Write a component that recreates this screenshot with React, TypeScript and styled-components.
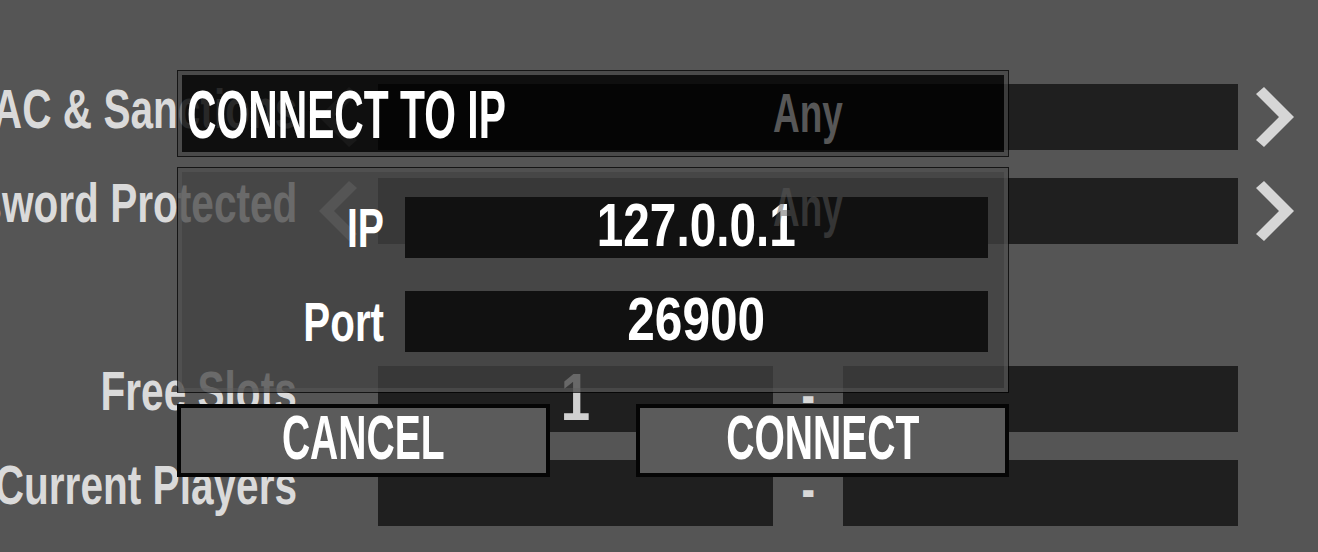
import React from "react";
import styled, { createGlobalStyle } from "styled-components";

const GlobalStyle = createGlobalStyle`
  html, body {
    margin: 0;
    padding: 0;
    background: #555555;
    overflow: hidden;
  }
  body {
    font-family: "Liberation Sans", Arial, sans-serif;
    font-weight: 700;
  }
`;

const Screen = styled.div`
  position: relative;
  width: 1318px;
  height: 552px;
  overflow: hidden;
  background: #555555;
`;

// the game font is a very narrow one, so squeeze a normal face horizontally
const Squeeze = styled.span<{ $sx: number; $from: "left" | "center" | "right" }>`
  display: inline-block;
  white-space: nowrap;
  transform: scaleX(${(p) => p.$sx});
  transform-origin: ${(p) => p.$from} center;
`;

/* ---------- filter panel behind the dialog ---------- */

const FilterPanel = styled.div`
  display: flex;
  flex-direction: column;
  gap: 28px;
  padding-top: 84px;
`;

const FilterRow = styled.div`
  display: grid;
  grid-template-columns: 297px 81px 860px 76px;
  grid-template-rows: 66px;
  height: 66px;
`;

const FilterLabel = styled.div`
  display: flex;
  justify-content: flex-end;
  align-items: center;
  min-height: 0;
  box-sizing: border-box;
  padding-bottom: 17px;
  color: #dadada;
  font-size: 56px;
  line-height: 1;
  white-space: nowrap;
`;

const ArrowCell = styled.div<{ $side: "left" | "right" }>`
  display: flex;
  align-items: center;
  justify-content: ${(p) => (p.$side === "left" ? "center" : "flex-start")};
  padding-left: ${(p) => (p.$side === "left" ? "0" : "16px")};
`;

const Field = styled.div`
  display: flex;
  align-items: center;
  justify-content: center;
  min-height: 0;
  background: #1f1f1f;
`;

// values of the filter list are drawn over the dialog by the game, hence $lift
const FieldValue = styled.span<{ $tone: string; $size: number; $lift?: boolean }>`
  color: ${(p) => p.$tone};
  font-size: ${(p) => p.$size}px;
  line-height: 1;
  padding-bottom: ${(p) => (p.$size > 60 ? 5 : 8)}px;
  ${(p) => (p.$lift ? "position: relative; z-index: 2;" : "")}
`;

const RangeGroup = styled.div`
  display: grid;
  grid-template-columns: 395px 70px 395px;
  grid-template-rows: 66px;
`;

const RangeDash = styled.div`
  display: flex;
  align-items: center;
  justify-content: center;
  padding-bottom: 8px;
  color: #d8d8d8;
  font-size: 56px;
  line-height: 1;
`;

const Chevron = ({ dir, color }: { dir: "left" | "right"; color: string }) => (
  <svg width="42" height="62" viewBox="0 0 42 62">
    <polygon
      points={
        dir === "right"
          ? "2,8 10,1 40,31 10,61 2,54 25,31"
          : "40,8 32,1 2,31 32,61 40,54 17,31"
      }
      fill={color}
    />
  </svg>
);

/* ---------- connect dialog ---------- */

const Dialog = styled.div`
  position: absolute;
  left: 177px;
  top: 70px;
  width: 832px;
  z-index: 1;
  display: flex;
  flex-direction: column;
`;

const TitleBar = styled.div`
  border: 1px solid rgba(0, 0, 0, 0.75);
  padding: 4px;
  box-shadow: inset 0 0 0 4px rgba(70, 70, 70, 0.71);
`;

const TitleFill = styled.div`
  height: 77px;
  display: flex;
  align-items: center;
  padding-left: 5px;
  background: rgba(0, 0, 0, 0.82);
  color: #ffffff;
  font-size: 68px;
  line-height: 1;
`;

const DialogBody = styled.div`
  margin-top: 10px;
  border: 1px solid rgba(0, 0, 0, 0.75);
  padding: 4px;
  box-shadow: inset 0 0 0 4px rgba(80, 80, 80, 0.85);
`;

const BodyFill = styled.div`
  display: grid;
  grid-template-columns: 202px 583px;
  grid-auto-rows: 61px;
  column-gap: 21px;
  row-gap: 33px;
  padding: 25px 16px 36px 0;
  background: rgba(65, 65, 65, 0.735);
`;

const DialogLabel = styled.div`
  display: flex;
  justify-content: flex-end;
  align-items: center;
  color: #ffffff;
  font-size: 56px;
  line-height: 1;
`;

const InputBox = styled.div`
  display: flex;
  align-items: center;
  justify-content: center;
  padding-bottom: 6px;
  box-sizing: border-box;
  background: #111111;
  color: #ffffff;
  font-size: 62px;
  line-height: 1;
`;

const ButtonRow = styled.div`
  display: flex;
  justify-content: space-between;
  margin-top: 11px;
`;

const DialogButton = styled.button`
  width: 373px;
  height: 73px;
  box-sizing: border-box;
  display: flex;
  align-items: center;
  justify-content: center;
  padding: 0 0 6px;
  border: 4px solid #050505;
  background: #5b5b5b;
  color: #ffffff;
  font-family: inherit;
  font-weight: 700;
  font-size: 63px;
  line-height: 1;
  cursor: pointer;
`;

const LABEL_SX = 0.725;

export default function App() {
  return (
    <>
      <GlobalStyle />
      <Screen>
        <FilterPanel>
          <FilterRow>
            <FilterLabel>
              <Squeeze $sx={LABEL_SX} $from="right">EAC &amp; Sanctions</Squeeze>
            </FilterLabel>
            <ArrowCell $side="left">
              <Chevron dir="left" color="#8a8a8a" />
            </ArrowCell>
            <Field>
              <FieldValue $tone="#575757" $size={56} $lift>
                <Squeeze $sx={0.66} $from="center">Any</Squeeze>
              </FieldValue>
            </Field>
            <ArrowCell $side="right">
              <Chevron dir="right" color="#d6d6d6" />
            </ArrowCell>
          </FilterRow>

          <FilterRow>
            <FilterLabel>
              <Squeeze $sx={LABEL_SX} $from="right">Password Protected</Squeeze>
            </FilterLabel>
            <ArrowCell $side="left">
              <Chevron dir="left" color="#8a8a8a" />
            </ArrowCell>
            <Field>
              <FieldValue $tone="rgba(90, 90, 90, 0.5)" $size={56} $lift>
                <Squeeze $sx={0.66} $from="center">Any</Squeeze>
              </FieldValue>
            </Field>
            <ArrowCell $side="right">
              <Chevron dir="right" color="#d6d6d6" />
            </ArrowCell>
          </FilterRow>

          <FilterRow />

          <FilterRow>
            <FilterLabel>
              <Squeeze $sx={LABEL_SX} $from="right">Free Slots</Squeeze>
            </FilterLabel>
            <div />
            <RangeGroup>
              <Field>
                <FieldValue $tone="#d0d0d0" $size={66}>
                  <Squeeze $sx={0.8} $from="center">1</Squeeze>
                </FieldValue>
              </Field>
              <RangeDash>
                <Squeeze $sx={LABEL_SX} $from="center">-</Squeeze>
              </RangeDash>
              <Field />
            </RangeGroup>
          </FilterRow>

          <FilterRow>
            <FilterLabel>
              <Squeeze $sx={LABEL_SX} $from="right">Current Players</Squeeze>
            </FilterLabel>
            <div />
            <RangeGroup>
              <Field />
              <RangeDash>
                <Squeeze $sx={LABEL_SX} $from="center">-</Squeeze>
              </RangeDash>
              <Field />
            </RangeGroup>
          </FilterRow>
        </FilterPanel>

        <Dialog>
          <TitleBar>
            <TitleFill>
              <Squeeze $sx={0.6} $from="left">CONNECT TO IP</Squeeze>
            </TitleFill>
          </TitleBar>

          <DialogBody>
            <BodyFill>
              <DialogLabel>
                <Squeeze $sx={0.7} $from="right">IP</Squeeze>
              </DialogLabel>
              <InputBox>
                <Squeeze $sx={0.77} $from="center">127.0.0.1</Squeeze>
              </InputBox>
              <DialogLabel>
                <Squeeze $sx={0.72} $from="right">Port</Squeeze>
              </DialogLabel>
              <InputBox>
                <Squeeze $sx={0.8} $from="center">26900</Squeeze>
              </InputBox>
            </BodyFill>
          </DialogBody>

          <ButtonRow>
            <DialogButton>
              <Squeeze $sx={0.62} $from="center">CANCEL</Squeeze>
            </DialogButton>
            <DialogButton>
              <Squeeze $sx={0.62} $from="center">CONNECT</Squeeze>
            </DialogButton>
          </ButtonRow>
        </Dialog>
      </Screen>
    </>
  );
}
